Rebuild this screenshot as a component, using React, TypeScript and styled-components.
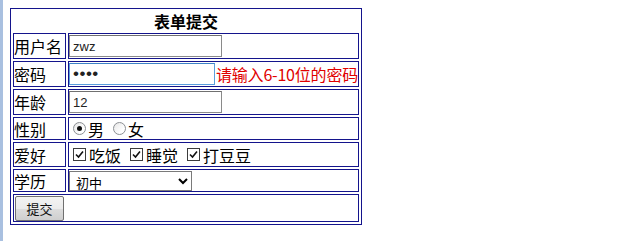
import styled, { createGlobalStyle } from "styled-components";

const GlobalStyle = createGlobalStyle`
  body {
    margin: 0;
    background: #fff;
    font-family: "Noto Sans CJK SC", "Microsoft YaHei", sans-serif;
    color: #000;
  }
`;

const Page = styled.div`
  display: flex;
  min-height: 100vh;
`;

const SideStrip = styled.div`
  width: 3px;
  background: #a9c0e0;
  flex-shrink: 0;
`;

const Main = styled.div`
  padding: 8px 0 0 7px;
`;

const FormTable = styled.form`
  box-sizing: border-box;
  width: 352px;
  border: 1px solid #14148c;
  padding: 2px;
  display: grid;
  grid-template-columns: 53px 291px;
  gap: 2px;
`;

const Title = styled.div`
  grid-column: 1 / -1;
  height: 20px;
  line-height: 20px;
  text-align: center;
  font-size: 16px;
  font-weight: bold;
`;

const Cell = styled.div<{ $h: number; $full?: boolean }>`
  box-sizing: border-box;
  height: ${({ $h }) => $h}px;
  border: 1px solid #14148c;
  display: flex;
  align-items: center;
  ${({ $full }) => ($full ? "grid-column: 1 / -1;" : "")}
`;

const LabelCell = styled(Cell)`
  font-size: 16px;
  line-height: 1;
  padding-left: 0;
  white-space: nowrap;
`;

const FieldCell = styled(Cell)`
  padding-left: 0;
  font-size: 16px;
  white-space: nowrap;
`;

const TextInput = styled.input<{ $w: number; $focus?: boolean }>`
  box-sizing: border-box;
  width: ${({ $w }) => $w}px;
  height: 22px;
  margin: 0;
  padding: 0 3px;
  border: 1px solid ${({ $focus }) => ($focus ? "#5b9fdc" : "#8a8a8a")};
  border-top-color: ${({ $focus }) => ($focus ? "#3d83c8" : "#707070")};
  font-family: "Liberation Sans", Arial, sans-serif;
  font-size: ${({ $focus }) => ($focus ? 17 : 13)}px;
  letter-spacing: ${({ $focus }) => ($focus ? "0.5px" : "normal")};
  color: #222;
  outline: none;
  background: #fff;
`;

const Hint = styled.span`
  color: #e00000;
  font-size: 16px;
  line-height: 1;
  margin-left: 1px;
  letter-spacing: -0.2px;
`;

const Choice = styled.label<{ $first?: boolean }>`
  display: inline-flex;
  align-items: center;
  margin-left: ${({ $first }) => ($first ? 4 : 9)}px;
  font-size: 16px;
  line-height: 1;
  cursor: pointer;
`;

const HiddenInput = styled.input`
  position: absolute;
  opacity: 0;
  width: 0;
  height: 0;
  margin: 0;
`;

const RadioCircle = styled.span<{ $on?: boolean }>`
  box-sizing: border-box;
  width: 13px;
  height: 13px;
  border-radius: 50%;
  border: 1px solid #8c8f94;
  background: linear-gradient(135deg, #e6e6e6, #ffffff 70%);
  display: inline-flex;
  align-items: center;
  justify-content: center;
  margin-right: 2px;
  &::after {
    content: "";
    width: 5px;
    height: 5px;
    border-radius: 50%;
    background: ${({ $on }) => ($on ? "#111" : "transparent")};
  }
`;

const CheckBox = styled.span`
  box-sizing: border-box;
  width: 13px;
  height: 13px;
  border: 1px solid #3c3c3c;
  background: #fff;
  display: inline-flex;
  align-items: center;
  justify-content: center;
  margin-right: 3px;
`;

const SelectBox = styled.select`
  box-sizing: border-box;
  width: 123px;
  height: 20px;
  margin: 0;
  padding: 0 2px;
  border: 1px solid #7a7a7a;
  border-radius: 0;
  font-family: "Noto Sans CJK SC", sans-serif;
  font-size: 13px;
  color: #000;
  background: #fff;
  outline: none;
`;

const SubmitButton = styled.button`
  box-sizing: border-box;
  width: 49px;
  height: 25px;
  margin-left: 1px;
  padding: 0;
  border: 1px solid #707070;
  border-radius: 2px;
  background: linear-gradient(#f3f3f3, #ebebeb 50%, #dddddd 51%, #cfcfcf);
  font-family: "Noto Sans CJK SC", sans-serif;
  font-size: 13px;
  color: #111;
`;

function Radio({ label, checked, first }: { label: string; checked?: boolean; first?: boolean }) {
  return (
    <Choice $first={first}>
      <HiddenInput type="radio" name="sex" defaultChecked={checked} />
      <RadioCircle $on={checked} />
      {label}
    </Choice>
  );
}

function Check({ label, first }: { label: string; first?: boolean }) {
  return (
    <Choice $first={first}>
      <HiddenInput type="checkbox" defaultChecked />
      <CheckBox>
        <svg width="9" height="9" viewBox="0 0 9 9">
          <path d="M1 4.5 L3.5 7 L8 1.5" fill="none" stroke="#111" strokeWidth="1.6" />
        </svg>
      </CheckBox>
      {label}
    </Choice>
  );
}

export default function App() {
  return (
    <>
      <GlobalStyle />
      <Page>
        <SideStrip />
        <Main>
          <FormTable onSubmit={(e) => e.preventDefault()}>
            <Title>表单提交</Title>

            <LabelCell $h={26}>用户名</LabelCell>
            <FieldCell $h={26}>
              <TextInput $w={153} type="text" defaultValue="zwz" />
            </FieldCell>

            <LabelCell $h={26}>密码</LabelCell>
            <FieldCell $h={26}>
              <TextInput $w={146} $focus type="password" defaultValue="1234" />
              <Hint>请输入6-10位的密码</Hint>
            </FieldCell>

            <LabelCell $h={26}>年龄</LabelCell>
            <FieldCell $h={26}>
              <TextInput $w={153} type="text" defaultValue="12" />
            </FieldCell>

            <LabelCell $h={23}>性别</LabelCell>
            <FieldCell $h={23}>
              <Radio label="男" checked first />
              <Radio label="女" />
            </FieldCell>

            <LabelCell $h={25}>爱好</LabelCell>
            <FieldCell $h={25}>
              <Check label="吃饭" first />
              <Check label="睡觉" />
              <Check label="打豆豆" />
            </FieldCell>

            <LabelCell $h={23}>学历</LabelCell>
            <FieldCell $h={23}>
              <SelectBox defaultValue="初中">
                <option>小学</option>
                <option>初中</option>
                <option>高中</option>
                <option>大学</option>
              </SelectBox>
            </FieldCell>

            <FieldCell $h={28} $full>
              <SubmitButton type="submit">提交</SubmitButton>
            </FieldCell>
          </FormTable>
        </Main>
      </Page>
    </>
  );
}
